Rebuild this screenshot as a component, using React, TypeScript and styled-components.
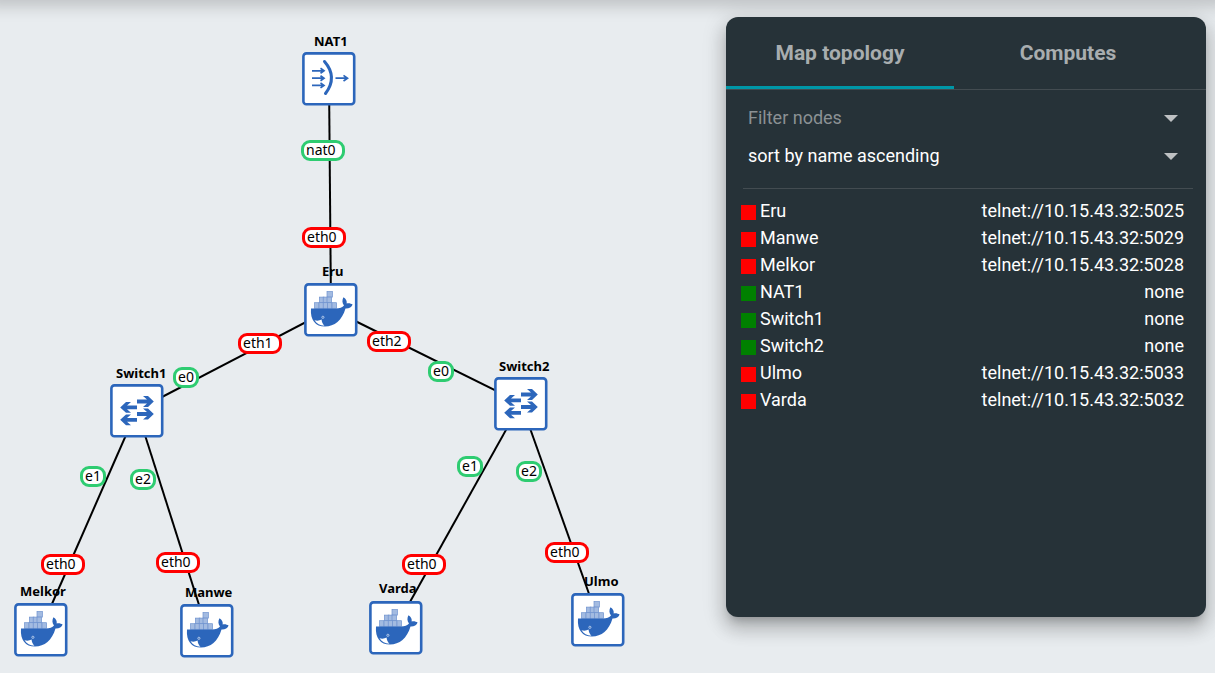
import React from "react";
import styled, { createGlobalStyle } from "styled-components";

const BLUE = "#2c66bb";

const GlobalStyle = createGlobalStyle`
  *, *::before, *::after { box-sizing: border-box; }
  body {
    margin: 0;
    background: #e8ecef;
    font-family: Roboto, "Liberation Sans", sans-serif;
  }
`;

const Page = styled.main`
  position: relative;
  display: flex;
  align-items: flex-start;
  min-height: 100vh;
  overflow: hidden;
`;

const ToolbarShadow = styled.div`
  position: absolute;
  top: -40px;
  left: -10px;
  right: -10px;
  height: 40px;
  box-shadow: 0 3px 14px 4px rgba(0, 0, 0, 0.17);
`;

const Canvas = styled.section`
  position: relative;
  flex: 1;
  align-self: stretch;
  min-width: 0;
  font-family: "Noto Sans", "Open Sans", sans-serif;
  color: #000;
`;

const Links = styled.svg`
  position: absolute;
  top: 0;
  left: 0;
  overflow: visible;
`;

const NodeIcon = styled.svg<{ $x: number; $y: number }>`
  position: absolute;
  left: ${(p) => p.$x}px;
  top: ${(p) => p.$y}px;
`;

const NodeName = styled.span<{ $x: number; $y: number }>`
  position: absolute;
  left: ${(p) => p.$x}px;
  top: ${(p) => p.$y}px;
  font-size: 13px;
  font-weight: 700;
  line-height: 18px;
  white-space: nowrap;
`;

const Port = styled.span<{ $x: number; $y: number; $up: boolean; $wide: boolean }>`
  position: absolute;
  left: ${(p) => p.$x}px;
  top: ${(p) => p.$y}px;
  width: ${(p) => (p.$wide ? 44 : 26)}px;
  height: 21px;
  padding-left: 2px;
  border: 3px solid ${(p) => (p.$up ? "#2ecc71" : "#ff0000")};
  border-radius: 9px;
  background: #fff;
  font-size: 14px;
  line-height: 14px;
  white-space: nowrap;
`;

const Panel = styled.aside`
  flex: none;
  width: 480px;
  min-height: 600px;
  margin: 17px 9px 17px 0;
  border-radius: 12px;
  background: #263238;
  color: #fff;
  position: relative;
  box-shadow: 0 7px 8px -4px rgba(0, 0, 0, 0.2), 0 12px 17px 2px rgba(0, 0, 0, 0.14),
    0 5px 22px 4px rgba(0, 0, 0, 0.12);
`;

const Tabs = styled.div`
  display: flex;
  height: 73px;
  border-bottom: 1px solid #434c51;
`;

const Tab = styled.button<{ $active?: boolean }>`
  width: 228px;
  padding: 3px 0 0;
  border: 0;
  border-bottom: 3px solid ${(p) => (p.$active ? "#0097a7" : "transparent")};
  background: none;
  color: #a8adaf;
  font: 700 21px/24px Roboto, sans-serif;
`;

const Filters = styled.div`
  display: flex;
  flex-direction: column;
  margin: 9px 13px 0 17px;
  padding-bottom: 13px;
  border-bottom: 1px solid #434c51;
`;

const SelectRow = styled.label`
  display: flex;
  align-items: center;
  position: relative;
  height: 38px;
`;

const Select = styled.select<{ $muted?: boolean }>`
  appearance: none;
  width: 100%;
  height: 38px;
  padding: 0 32px 0 5px;
  border: 0;
  background: none;
  color: ${(p) => (p.$muted ? "#8b9194" : "#fff")};
  font: 400 18px/24px Roboto, sans-serif;
`;

const Arrow = styled.svg`
  position: absolute;
  right: 15px;
  top: 16px;
  pointer-events: none;
`;

const NodeTable = styled.table`
  width: calc(100% - 37px);
  margin: 8px 22px 0 15px;
  border-collapse: collapse;
  font-size: 18px;
  line-height: 27px;
`;

const Cell = styled.td<{ $end?: boolean }>`
  height: 27px;
  padding: 0;
  text-align: ${(p) => (p.$end ? "right" : "left")};
`;

const NameCell = styled.div`
  display: flex;
  align-items: center;
  gap: 4px;
`;

const Status = styled.span<{ $up: boolean }>`
  width: 15px;
  height: 15px;
  margin-top: 3px;
  background: ${(p) => (p.$up ? "#008000" : "#ff0000")};
`;

type Kind = "nat" | "docker" | "switch";

const nodes: { name: string; kind: Kind; x: number; y: number; lx: number; ly: number; console: string }[] = [
  { name: "Eru", kind: "docker", x: 304, y: 283, lx: 322, ly: 262, console: "telnet://10.15.43.32:5025" },
  { name: "Manwe", kind: "docker", x: 180, y: 604, lx: 185, ly: 583, console: "telnet://10.15.43.32:5029" },
  { name: "Melkor", kind: "docker", x: 14, y: 603, lx: 20, ly: 582, console: "telnet://10.15.43.32:5028" },
  { name: "NAT1", kind: "nat", x: 302, y: 52, lx: 314, ly: 32, console: "none" },
  { name: "Switch1", kind: "switch", x: 110, y: 384, lx: 116, ly: 364, console: "none" },
  { name: "Switch2", kind: "switch", x: 494, y: 377, lx: 499, ly: 357, console: "none" },
  { name: "Ulmo", kind: "docker", x: 571, y: 593, lx: 584, ly: 572, console: "telnet://10.15.43.32:5033" },
  { name: "Varda", kind: "docker", x: 369, y: 601, lx: 379, ly: 579, console: "telnet://10.15.43.32:5032" },
];

const links: [string, string][] = [
  ["NAT1", "Eru"],
  ["Eru", "Switch1"],
  ["Eru", "Switch2"],
  ["Switch1", "Melkor"],
  ["Switch1", "Manwe"],
  ["Switch2", "Varda"],
  ["Switch2", "Ulmo"],
];

const ports: { text: string; x: number; y: number; up: boolean }[] = [
  { text: "nat0", x: 301, y: 140, up: true },
  { text: "eth0", x: 302, y: 227, up: false },
  { text: "eth1", x: 238, y: 333, up: false },
  { text: "eth2", x: 367, y: 331, up: false },
  { text: "e0", x: 173, y: 367, up: true },
  { text: "e0", x: 428, y: 361, up: true },
  { text: "e1", x: 80, y: 466, up: true },
  { text: "e2", x: 130, y: 469, up: true },
  { text: "e1", x: 457, y: 456, up: true },
  { text: "e2", x: 516, y: 461, up: true },
  { text: "eth0", x: 41, y: 554, up: false },
  { text: "eth0", x: 156, y: 552, up: false },
  { text: "eth0", x: 402, y: 554, up: false },
  { text: "eth0", x: 545, y: 542, up: false },
];

const center = (name: string) => {
  const node = nodes.find((n) => n.name === name)!;
  return { x: node.x + 27, y: node.y + 26 };
};

const NatGlyph = () => (
  <g fill="none" stroke={BLUE}>
    <path d="M22.5 9.5C31.5 20 31.5 31 23.5 41.5" strokeWidth="3" strokeLinecap="round" />
    <g strokeWidth="1.7">
      {[18.8, 26.2, 33.4].map((y) => (
        <path key={y} d={`M10 ${y}H22M18.5 ${y - 2.5}L22 ${y}L18.5 ${y + 2.5}`} />
      ))}
      <path d="M33.5 26.2H45.5M41.5 23.4L45.5 26.2L41.5 29" />
    </g>
  </g>
);

const SwitchGlyph = () => (
  <g fill={BLUE}>
    {[17.5, 30].map((y) => (
      <path key={y} d={`M27 ${y - 1.9}H37L33 ${y - 5.4}H38L43.8 ${y}L38 ${y + 5.4}H33L37 ${y + 1.9}H27Z`} />
    ))}
    {[23.4, 35.8].map((y) => (
      <path key={y} d={`M27 ${y - 1.9}H17L21 ${y - 5.4}H16L10.2 ${y}L16 ${y + 5.4}H21L17 ${y + 1.9}H27Z`} />
    ))}
  </g>
);

const crates = [
  [23, 8.5], [15.4, 14.1], [19.2, 14.1], [23, 14.1],
  [10.5, 19.7], [15, 19.7], [19.2, 19.7], [23.4, 19.7], [28, 19.7],
];

const DockerGlyph = () => (
  <g>
    <g fill="#a3bbe1" stroke="#6f93cf" strokeWidth="0.7">
      {crates.map(([x, y]) => (
        <rect key={`${x}-${y}`} x={x} y={y} width={y < 9 ? 5.4 : 4.6} height="5.6" />
      ))}
    </g>
    <path
      fill={BLUE}
      d="M7 25.5H32C35.5 25.5 38.5 24.5 40 22.5C38 20 38 17 39.5 14.3C42 15.8 43 18 42.7 20.4C44.7 19.8 47 20.3 48.6 21.6C47.6 24.4 45 25.8 41.5 25.6C38 37.5 30.5 43.6 21 43.6C11.5 43.6 6 37 7 25.5Z"
    />
    <path fill="#fff" d="M10.5 37.3C13 38 15.5 37.8 17.6 36.6C17.8 39 18.5 41 20.4 42.8C16 42.7 12.6 40.7 10.5 37.3Z" />
    <circle cx="18.9" cy="34.3" r="1.1" fill={BLUE} stroke="#dfe8f6" strokeWidth="0.7" />
  </g>
);

const glyphs = { nat: NatGlyph, switch: SwitchGlyph, docker: DockerGlyph };

export default function App() {
  return (
    <>
      <GlobalStyle />
      <Page>
        <ToolbarShadow />
        <Canvas aria-label="Network map">
          {nodes.map((n) => (
            <NodeName key={n.name} $x={n.lx} $y={n.ly}>
              {n.name}
            </NodeName>
          ))}
          <Links width="1" height="1" stroke="#000" strokeWidth="2" aria-hidden="true">
            {links.map(([a, b]) => {
              const from = center(a);
              const to = center(b);
              return <line key={a + b} x1={from.x} y1={from.y} x2={to.x} y2={to.y} />;
            })}
          </Links>
          {nodes.map((n) => {
            const Glyph = glyphs[n.kind];
            return (
              <NodeIcon key={n.name} $x={n.x} $y={n.y} width="54" height="54" aria-hidden="true">
                <rect x="1.4" y="1.4" width="50.8" height="50.8" rx="3" fill="#fff" stroke={BLUE} strokeWidth="2.6" />
                <Glyph />
              </NodeIcon>
            );
          })}
          {ports.map((p) => (
            <Port key={`${p.x}-${p.y}`} $x={p.x} $y={p.y} $up={p.up} $wide={p.text.length > 2}>
              {p.text}
            </Port>
          ))}
        </Canvas>
        <Panel>
          <Tabs role="tablist">
            <Tab type="button" role="tab" aria-selected="true" $active>
              Map topology
            </Tab>
            <Tab type="button" role="tab" aria-selected="false">
              Computes
            </Tab>
          </Tabs>
          <Filters>
            <SelectRow>
              <Select $muted aria-label="Filter nodes">
                <option>Filter nodes</option>
              </Select>
              <Arrow width="14" height="7" aria-hidden="true">
                <path d="M0 0H14L7 7Z" fill="#bec1c3" />
              </Arrow>
            </SelectRow>
            <SelectRow>
              <Select aria-label="Sort order">
                <option>sort by name ascending</option>
              </Select>
              <Arrow width="14" height="7" aria-hidden="true">
                <path d="M0 0H14L7 7Z" fill="#bec1c3" />
              </Arrow>
            </SelectRow>
          </Filters>
          <NodeTable>
            <tbody>
              {nodes.map((n) => (
                <tr key={n.name}>
                  <Cell>
                    <NameCell>
                      <Status $up={n.kind !== "docker"} />
                      {n.name}
                    </NameCell>
                  </Cell>
                  <Cell $end>{n.console}</Cell>
                </tr>
              ))}
            </tbody>
          </NodeTable>
        </Panel>
      </Page>
    </>
  );
}
